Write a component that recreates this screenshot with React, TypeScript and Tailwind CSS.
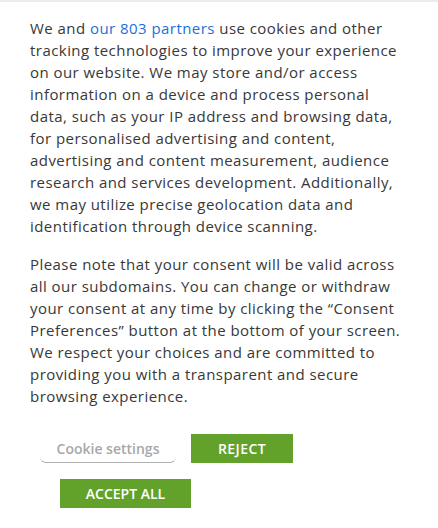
const intro = [
  "tracking technologies to improve your experience",
  "on our website. We may store and/or access",
  "information on a device and process personal",
  "data, such as your IP address and browsing data,",
  "for personalised advertising and content,",
  "advertising and content measurement, audience",
  "research and services development. Additionally,",
  "we may utilize precise geolocation data and",
  "identification through device scanning.",
];

const note = [
  "Please note that your consent will be valid across",
  "all our subdomains. You can change or withdraw",
  "your consent at any time by clicking the “Consent",
  "Preferences” button at the bottom of your screen.",
  "We respect your choices and are committed to",
  "providing you with a transparent and secure",
  "browsing experience.",
];

export default function App() {
  return (
    <div className="w-[438px] h-[528px] bg-white overflow-hidden border-t-2 border-[#ececec]" style={{ fontFamily: "'Open Sans', Lato, sans-serif" }}>
      <div className="pl-[30px] pr-[10px] pt-[15px] text-[15px] leading-[22px] tracking-[0.45px] text-[#383838] whitespace-nowrap">
        <p>
          <span className="block">
            We and <a className="text-[#1a6fdc]">our 803 partners</a> use cookies and other
          </span>
          {intro.map((l) => (
            <span key={l} className="block">{l}</span>
          ))}
        </p>
        <p className="mt-[16px]">
          {note.map((l) => (
            <span key={l} className="block">{l}</span>
          ))}
        </p>
      </div>

      <div className="mt-[27px] pl-[40px] flex flex-col gap-[16px]">
        <div className="flex gap-[15px]">
          <button className="w-[136px] h-[29px] text-[14px] font-semibold text-[#a8a8a8] border-b border-[#b0b0b0] rounded-b-[6px]">
            Cookie settings
          </button>
          <button className="w-[102px] h-[29px] bg-[#62a22b] text-white text-[14px] font-semibold tracking-[0.4px]">
            REJECT
          </button>
        </div>
        <button className="ml-[20px] w-[131px] h-[29px] bg-[#62a22b] text-white text-[14px] font-semibold">
          ACCEPT ALL
        </button>
      </div>
    </div>
  );
}
